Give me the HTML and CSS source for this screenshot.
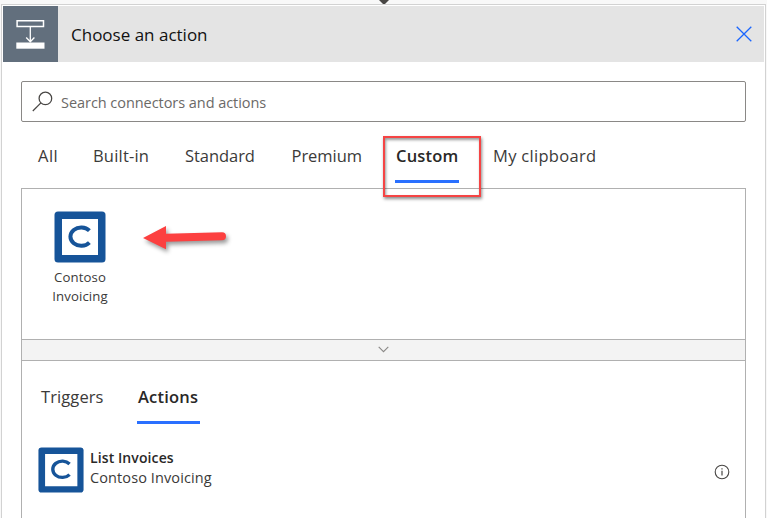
FILE: index.html
```html
<!DOCTYPE html>
<html lang="en">
<head>
<meta charset="utf-8">
<title>Choose an action</title>
<link rel="stylesheet" href="styles.css">
</head>
<body>
<svg class="connector" viewBox="0 0 10 4"><path d="M0 0h10L6 4H4z" fill="#484644"/></svg>
<main class="card">
  <header class="header">
    <div class="header-icon">
      <svg width="55" height="56" viewBox="0 0 55 56" fill="none" stroke="#fff">
        <path d="M14.1 14.7h26.4v5.8H14.1z" stroke-width="1.5"/>
        <path d="M27.3 21v15M23.2 31.5l4.1 4.3 4.1-4.3" stroke-width="1.3"/>
        <path d="M13.3 36.5h28.2v6.2H13.3z" fill="#fff" stroke="none"/>
      </svg>
    </div>
    <h1 class="title">Choose an action</h1>
    <svg class="close" width="16" height="16" viewBox="0 0 16 16"><path d="M.7.7l14.6 14.6M15.3.7L.7 15.3" stroke="#1a66ff" stroke-width="1.3"/></svg>
  </header>
  <div class="search">
    <svg width="22" height="22" viewBox="0 0 22 22" fill="none" stroke="#484644" stroke-width="1.25"><circle cx="13.4" cy="7.4" r="6.3"/><path d="M8.9 11.9L.8 20"/></svg>
    <span class="search-text">Search connectors and actions</span>
  </div>
  <nav class="tabs">
    <span class="tab all">All</span>
    <span class="tab builtin">Built-in</span>
    <span class="tab">Standard</span>
    <span class="tab">Premium</span>
    <span class="tab active custom">Custom<i class="highlight"></i></span>
    <span class="tab clipboard">My clipboard</span>
  </nav>
  <section class="connectors">
    <div class="tile">
      <svg class="logo" viewBox="0 0 52 52"><rect x=".5" y=".5" width="51" height="51" rx="3.5" fill="#165499"/><path d="M8 8h36v36H8z" fill="#fff"/><path d="M35.4 19.6A10.8 9.2 0 1 0 35.4 31.6" fill="none" stroke="#165499" stroke-width="4"/></svg>
      <span class="tile-name">Contoso</span>
      <span class="tile-name second">Invoicing</span>
    </div>
    <svg class="arrow" width="92" height="38" viewBox="0 0 92 38"><path d="M3 16L26 4v7.8l56-1.6a4 4 0 0 1 0 8L26 19.8v7.4z" fill="#fc4040"/></svg>
  </section>
  <div class="divider"><svg width="11" height="7" viewBox="0 0 11 7"><path d="M.7.8l4.8 4.8L10.3.8" fill="none" stroke="#8a8886" stroke-width="1.1"/></svg></div>
  <section class="operations">
    <nav class="subtabs">
      <span class="tab triggers">Triggers</span>
      <span class="tab active actions">Actions</span>
    </nav>
    <div class="operation">
      <svg class="logo small" viewBox="0 0 52 52"><rect x=".5" y=".5" width="51" height="51" rx="3.5" fill="#165499"/><path d="M8 8h36.5v36.5H8z" fill="#fff"/><path d="M35.7 19.2A10.8 9.2 0 1 0 35.7 31.2" fill="none" stroke="#165499" stroke-width="3.8"/></svg>
      <div class="operation-text">
        <strong>List Invoices</strong>
        <span>Contoso Invoicing</span>
      </div>
      <svg class="info" width="16" height="16" viewBox="0 0 16 16"><circle cx="8" cy="8" r="6.8" fill="none" stroke="#484644" stroke-width="1.1"/><path d="M8 6.7v4.7M8 4.2v1.3" stroke="#484644" stroke-width="1.2"/></svg>
    </div>
  </section>
</main>
</body>
</html>
```
FILE: styles.css
```css
* { box-sizing: border-box; }
html { overflow: hidden; }
body {
  margin: 0;
  height: 518px;
  overflow: hidden;
  background: #f8f8f8;
  color: #3b3a39;
  font-family: "Open Sans", "Noto Sans", sans-serif;
}
.connector { display: block; width: 10px; height: 4px; margin-left: 379px; }
.card {
  width: 765px;
  height: 530px;
  margin-left: 1px;
  padding: 1px;
  border: 1px solid #d2d2d2;
  background: #fff;
}
.header { display: flex; align-items: center; height: 56px; background: #e4e4e4; }
.header-icon { width: 55px; height: 56px; background: #626f7d; }
.title { margin: 0 auto 0 13px; padding-top: 1px; font-size: 17px; font-weight: 400; letter-spacing: 0; line-height: 24px; color: #111; }
.close { margin-right: 12px; }
.search {
  display: flex;
  align-items: center;
  width: 725px;
  height: 41px;
  margin: 19px 0 0 18px;
  padding-left: 10px;
  border: 1px solid #8a8886;
  border-radius: 2px;
}
.search-text { margin-left: 7px; padding-top: 2px; font-size: 14.5px; letter-spacing: -.05px; color: #6b6967; }
.tabs {
  display: grid;
  grid-template-columns: 55px 92px 106.5px 103.5px 98px auto;
  height: 66px;
  padding: 18px 0 0 35px;
}
.tab { justify-self: start; height: 43px; line-height: 32px; font-size: 16.5px; letter-spacing: -.05px; white-space: nowrap; }
.all { letter-spacing: .5px; }
.builtin { letter-spacing: .2px; }
.clipboard { letter-spacing: .3px; }
.active { padding: 0 1px; font-weight: 600; letter-spacing: .2px; color: #292827; border-bottom: 3px solid #2a70ff; }
.custom { position: relative; width: 64px; }
.highlight {
  position: absolute;
  left: -12px;
  top: -4px;
  width: 98px;
  height: 61px;
  border: 2px solid #f54444;
  box-shadow: 1px 2px 3px rgba(0,0,0,.45), inset 1px 2px 3px rgba(0,0,0,.4);
}
.connectors {
  display: flex;
  width: 725px;
  height: 151px;
  margin-left: 18px;
  padding: 22px 0 0 30px;
  border: 1px solid #b0b0b0;
  border-bottom: 0;
}
.tile { display: flex; flex-direction: column; align-items: center; width: 56px; }
.logo { width: 52px; height: 52px; flex: none; }
.tile-name { margin-top: 4px; font-size: 13.2px; line-height: 20px; letter-spacing: .1px; white-space: nowrap; }
.second { margin-top: -1px; }
.arrow { margin: 11px 0 0 32px; filter: drop-shadow(2px 3px 2px rgba(0,0,0,.4)); }
.divider {
  display: flex;
  justify-content: center;
  align-items: center;
  width: 725px;
  height: 22px;
  margin-left: 18px;
  padding-bottom: 2px;
  border: 1px solid #b0b0b0;
  background: #f3f3f3;
}
.operations { width: 725px; height: 170px; margin-left: 18px; padding: 20px 15px 0 16px; border: 1px solid #b0b0b0; border-width: 0 1px; }
.subtabs { display: flex; padding-left: 3px; }
.triggers { width: 96px; letter-spacing: .1px; }
.subtabs .actions { width: 63px; letter-spacing: .2px; }
.operation { display: flex; align-items: center; margin-top: 22px; height: 48px; }
.small { width: 46px; height: 46px; }
.operation-text { display: flex; flex-direction: column; margin: -4px 0 0 6px; font-size: 14.5px; line-height: 20px; letter-spacing: .1px; }
.operation-text strong { font-weight: 600; font-size: 14px; color: #292827; letter-spacing: .1px; }
.info { margin: 3px 0 0 auto; }
```
